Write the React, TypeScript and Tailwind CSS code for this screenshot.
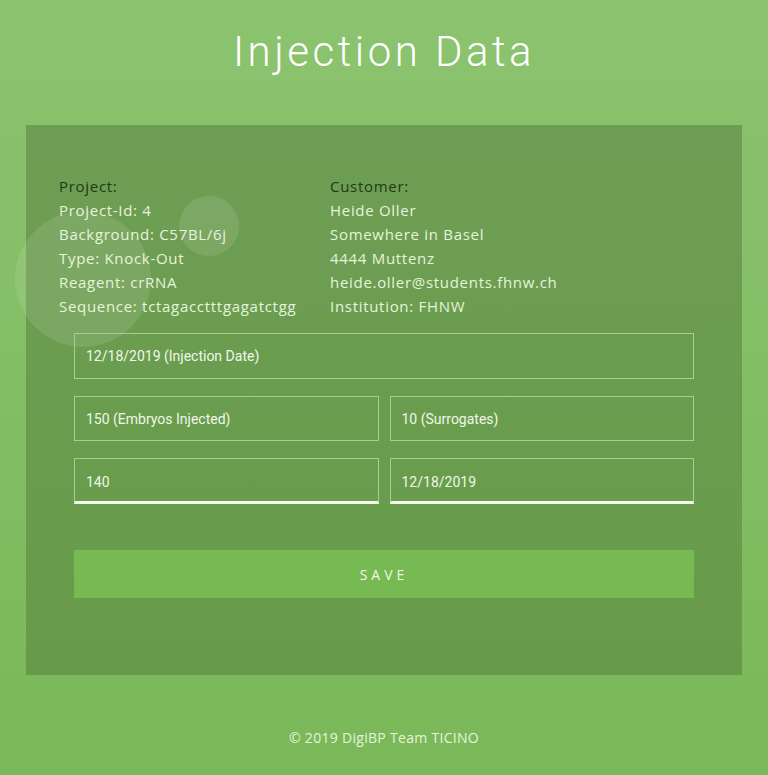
import React from "react";

const info = "font-['Open_Sans',sans-serif]";

export default function App() {
  return (
    <div className="min-h-[775px] w-full bg-gradient-to-b from-[#8cc36f] to-[#7ab859] flex flex-col items-center overflow-hidden">
      <h1 className="mt-[28px] h-[48px] text-[42px] leading-[48px] font-light tracking-[3.5px] text-white font-['Roboto',sans-serif]">
        Injection Data
      </h1>
      <div className="relative mt-[49px] h-[550px] w-[716px] bg-gradient-to-b from-[#6e9e55] to-[#679b49]">
        <div className="absolute left-[-11px] top-[86px] h-[136px] w-[136px] rounded-full bg-white/10" />
        <div className="absolute left-[153px] top-[71px] h-[60px] w-[60px] rounded-full bg-white/10" />
        <div className={`relative grid grid-cols-[271px_1fr] pt-[49px] pl-[33px] text-[15px] leading-[24px] tracking-[0.7px] text-[#e6f4dc] ${info}`}>
          <div className="flex flex-col">
            <span className="text-[#1e3a18]">Project:</span>
            <span>Project-Id: 4</span>
            <span>Background: C57BL/6j</span>
            <span>Type: Knock-Out</span>
            <span>Reagent: crRNA</span>
            <span>Sequence: tctagacctttgagatctgg</span>
          </div>
          <div className="flex flex-col">
            <span className="text-[#1e3a18]">Customer:</span>
            <span>Heide Oller</span>
            <span>Somewhere in Basel</span>
            <span>4444 Muttenz</span>
            <span>heide.oller@students.fhnw.ch</span>
            <span>Institution: FHNW</span>
          </div>
        </div>
        <div className="relative mt-[15px] flex flex-col px-[48px] font-['Roboto',sans-serif] text-[14px] text-[#eef8e6]">
          <div className="flex h-[46px] items-center border border-[#a7cd92] px-[11px]">12/18/2019 (Injection Date)</div>
          <div className="mt-[17px] grid grid-cols-2 gap-[11px]">
            <div className="flex h-[45px] items-center border border-[#a7cd92] px-[11px] pt-[1px]">150 (Embryos Injected)</div>
            <div className="flex h-[45px] items-center border border-[#a7cd92] px-[11px] pt-[1px]">10 (Surrogates)</div>
          </div>
          <div className="mt-[17px] grid grid-cols-2 gap-[11px]">
            <div className="flex h-[46px] items-center border border-b-[3px] border-[#a7cd92] border-b-[#f2f9ec] px-[11px] pt-[4px]">140</div>
            <div className="flex h-[46px] items-center border border-b-[3px] border-[#a7cd92] border-b-[#f2f9ec] px-[11px] pt-[4px]">12/18/2019</div>
          </div>
          <button className="mt-[46px] flex h-[48px] items-center justify-center bg-[#77b953] text-[14px] tracking-[4px] text-[#eef8e6] font-['Open_Sans',sans-serif]">
            SAVE
          </button>
        </div>
      </div>
      <div className={`mt-[53px] mb-[27px] h-[20px] text-[14px] leading-[20px] tracking-[0.3px] text-[#e6f4dc] ${info}`}>
        © 2019 DigiBP Team TICINO
      </div>
    </div>
  );
}
